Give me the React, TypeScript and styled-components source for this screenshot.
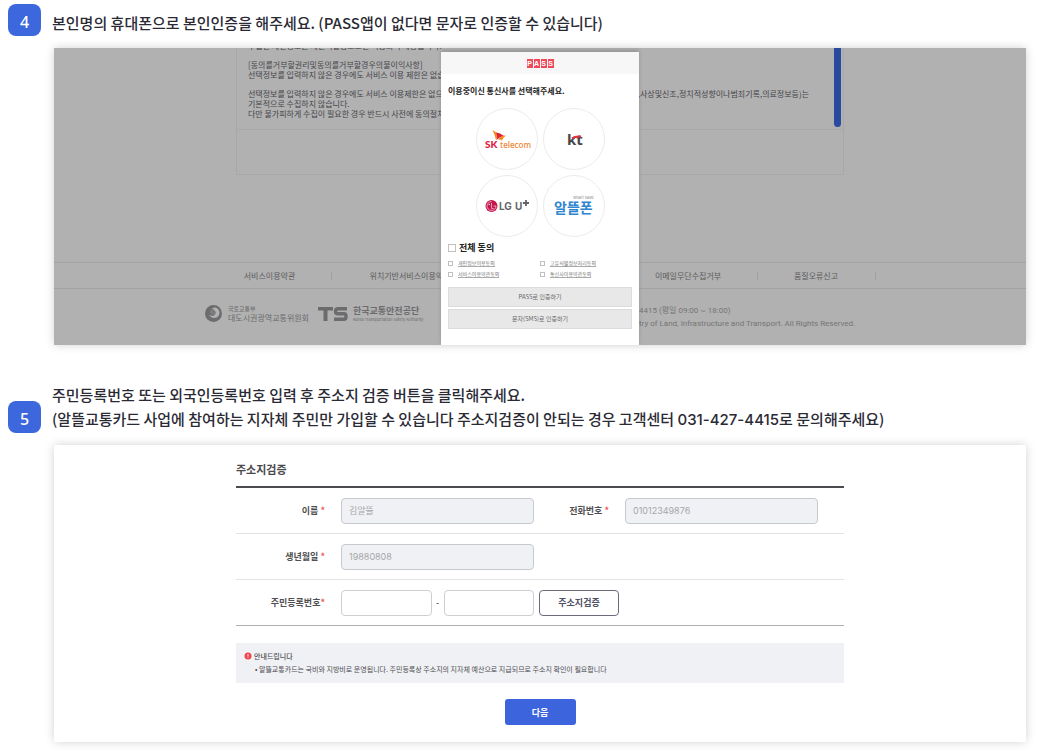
import React from 'react';
import styled, { createGlobalStyle, css } from 'styled-components';

const GlobalStyle = createGlobalStyle`
  *, *::before, *::after { box-sizing: border-box; }
  body {
    margin: 0;
    background: #fff;
    color: #2a2a35;
    font-family: 'Noto Sans CJK KR', 'Noto Sans', sans-serif;
  }
  h2, h3, p, ul { margin: 0; padding: 0; font-weight: inherit; }
  ul { list-style: none; }
  button, input { font: inherit; color: inherit; margin: 0; }
`;

/* ---------- steps ---------- */

const Page = styled.main`
  display: flex;
  flex-direction: column;
  gap: 38px;
  padding: 4px 20px 12px 8px;
`;

const StepHead = styled.header`
  display: flex;
  align-items: flex-end;
  gap: 11px;
`;

const StepNumber = styled.span`
  flex: none;
  width: 33px;
  height: 32px;
  padding-top: 4px;
  border-radius: 8px;
  background: #3c67dd;
  color: #fff;
  font: 500 16px/28px 'Noto Sans', sans-serif;
  text-align: center;
`;

const StepTitle = styled.h2`
  padding-bottom: 1px;
  font-size: 15px;
  line-height: 24px;
  font-weight: 500;
`;

const Latin = styled.span`
  font-family: Inter, sans-serif;
`;

const Card = styled.div<{ $dimmed?: boolean }>`
  position: relative;
  margin: 12px 0 0 46px;
  background: ${(p) => (p.$dimmed ? '#b1b1b1' : '#fff')};
  box-shadow: 0 0 9px rgba(0, 0, 0, 0.18);
`;

const Column = styled.div<{ $width: number }>`
  width: 100%;
  max-width: ${(p) => p.$width}px;
  margin: 0 auto;
`;

/* ---------- dimmed consent page ---------- */

const Backdrop = styled.div`
  overflow: hidden;
  color: #45454a;
  font-size: 8px;
  line-height: 10px;
`;

const ConsentBox = styled(Column)`
  border: 1px solid #a8a8a8;
  border-top: 0;
`;

const ConsentText = styled.div`
  display: flex;
  justify-content: space-between;
  height: 82px;
  padding: 0 2px 0 11px;
  border-bottom: 1px solid #a8a8a8;
`;

const Paragraphs = styled.div`
  flex: 1;
  display: flex;
  flex-direction: column;
  gap: 9px;
  margin-top: -7px;
  padding-right: 25px;
  white-space: nowrap;
`;

const SplitLine = styled.span`
  display: flex;
  justify-content: space-between;
`;

const ScrollThumb = styled.div`
  width: 7px;
  height: 79px;
  border-radius: 0 0 4px 4px;
  background: #2a4a9f;
`;

const ConsentFoot = styled.div`
  height: 44px;
`;

const FooterNav = styled.nav`
  margin-top: 87px;
  border-top: 1px solid #a3a3a3;
  border-bottom: 1px solid #a3a3a3;
`;

const NavList = styled.ul`
  display: grid;
  grid-template-columns: 123fr 158fr 130fr 138fr 118fr;
  align-items: center;
  height: 25px;
  padding-left: 4px;
`;

const NavItem = styled.li<{ $column: number }>`
  grid-column: ${(p) => p.$column};
  border-right: 1px solid #a0a0a0;
  color: #5c5c5e;
  line-height: 8px;
  text-align: center;
  white-space: nowrap;
`;

const FooterInfo = styled.div`
  display: grid;
  grid-template-columns: 435fr 237fr;
  height: 56px;
  padding-top: 15px;
  color: #757575;
`;

const Agencies = styled.div`
  display: flex;
  align-items: flex-start;
  gap: 5px;
  color: #6c6c6e;
`;

const Agency = styled.div`
  white-space: nowrap;
`;

const AgencyLine = styled.p<{ $size: number; $line: number; $bold?: boolean }>`
  font-size: ${(p) => p.$size}px;
  line-height: ${(p) => p.$line}px;
  font-weight: ${(p) => (p.$bold ? 700 : 400)};
`;

const TsMark = styled.svg`
  margin: 3px 0 0 4px;
`;

const Copyright = styled.p`
  font: 8px/13px Roboto, 'Noto Sans CJK KR', sans-serif;
  white-space: nowrap;
`;

/* ---------- PASS dialog ---------- */

const Dialog = styled.section`
  position: absolute;
  top: 4px;
  bottom: 0;
  left: 50%;
  width: 198px;
  transform: translateX(-50%);
  background: #fff;
  box-shadow: 0 -2px 4px rgba(0, 0, 0, 0.16);
`;

const DialogHead = styled.div`
  display: flex;
  justify-content: center;
  align-items: center;
  gap: 1px;
  height: 22px;
  background: #f7f7f8;
`;

const PassLetter = styled.span`
  width: 6px;
  height: 9px;
  background: #f04a5a;
  color: #fff;
  font: 700 7px/9px 'Liberation Sans', sans-serif;
  text-align: center;
`;

const DialogBody = styled.form`
  padding: 11px 7px 0;
`;

const DialogTitle = styled.h3`
  color: #222;
  font-size: 8px;
  line-height: 12px;
  font-weight: 700;
`;

const Carriers = styled.div`
  display: grid;
  grid-template-columns: 62px 62px;
  justify-content: center;
  gap: 5px;
  margin: 11px 0 5px;
`;

const Carrier = styled.button`
  display: grid;
  place-items: center;
  width: 62px;
  height: 62px;
  padding: 0;
  border: 1px solid #ececec;
  border-radius: 50%;
  background: #fff;
`;

const AgreeList = styled.div`
  display: grid;
  grid-template-columns: 1fr 1fr;
  margin: 4px 0 7px;
`;

const Agree = styled.label<{ $all?: boolean }>`
  display: flex;
  align-items: center;
  gap: 5px;
  color: #777;
  font-size: 5px;
  line-height: 6px;
  height: 11px;

  ${(p) =>
    p.$all &&
    css`
      gap: 3px;
      height: 12px;
      color: #222;
      font-size: 9px;
      line-height: 12px;
      font-weight: 700;
    `}
`;

const Tick = styled.input<{ $size: number }>`
  appearance: none;
  width: ${(p) => p.$size}px;
  height: ${(p) => p.$size}px;
  border: 1px solid #c0c0c0;
  background: #fff;
`;

const Underlined = styled.span`
  border-bottom: 1px solid #aaa;
`;

const GreyButton = styled.button`
  display: block;
  width: 100%;
  height: 20px;
  margin-bottom: 2px;
  padding: 0;
  border: 1px solid #dcdcdc;
  background: #e8e8e8;
  color: #666;
  font-size: 6px;
  line-height: 18px;
`;

/* ---------- address form ---------- */

const AddressForm = styled.form`
  width: 100%;
  max-width: 608px;
  margin: 0 auto;
  padding: 16px 0 17px;
`;

const FormTitle = styled.h3`
  padding-bottom: 9px;
  border-bottom: 2px solid #4a4a4f;
  color: #4a4a4c;
  font-size: 11px;
  line-height: 16px;
  font-weight: 700;
`;

const FormRow = styled.div<{ $last?: boolean }>`
  display: grid;
  grid-template-columns: 105fr 193fr 91fr 193fr 26fr;
  align-items: center;
  height: 46px;
  border-bottom: 1px solid ${(p) => (p.$last ? '#b0b0b3' : '#e2e2e4')};
`;

const FieldLabel = styled.label`
  padding-right: 16px;
  color: #505052;
  font-size: 9px;
  line-height: 14px;
  font-weight: 700;
  text-align: right;
  white-space: nowrap;
`;

const Required = styled.span`
  color: #f0525a;
`;

const TextField = styled.input`
  width: 100%;
  min-width: 0;
  height: 26px;
  padding: 0 7px;
  border: 1px solid #cdcfd3;
  border-radius: 4px;
  background: #fff;
  color: #a6a6aa;
  font: 9px/14px Inter, 'Noto Sans CJK KR', sans-serif;

  &:disabled {
    border-color: #c6cacf;
    background: #f0f1f5;
  }
`;

const SplitField = styled.div`
  display: grid;
  grid-template-columns: 1fr 12px 1fr;
  align-items: center;
  font-size: 9px;
  text-align: center;
`;

const VerifyButton = styled.button`
  width: 80px;
  height: 26px;
  margin-left: 5px;
  padding: 0;
  border: 1px solid #6b6b7c;
  border-radius: 4px;
  background: #fff;
  color: #505066;
  font-size: 9px;
  font-weight: 700;
`;

const Notice = styled.div`
  height: 40px;
  margin: 17px 0 16px;
  padding: 6px 8px;
  background: #f0f1f5;
  color: #4d4d52;
  font-size: 7px;
  line-height: 14px;
`;

const NoticeTitle = styled.p`
  display: flex;
  align-items: center;
  gap: 2px;
  font-weight: 500;
`;

const NoticeText = styled.p`
  padding-left: 11px;
  line-height: 13px;
`;

const NextButton = styled.button`
  display: block;
  width: 71px;
  height: 26px;
  margin: 0 auto;
  padding: 0;
  border: 0;
  border-radius: 3px;
  background: #3c64dc;
  color: #fff;
  font-size: 9px;
  font-weight: 700;
`;

/* ---------- logos ---------- */

const SkLogo = () => (
  <svg width="46" height="24" viewBox="0 0 46 24" overflow="visible" aria-label="SK telecom">
    <path d="M8.500 3 L14.500 7 L12 13 Q11 8 8.500 3Z" fill="#f08a1d" />
    <path d="M12 5.500 Q16 5.500 20 9 Q16 9.500 12.500 13 Q14 9 12 5.500Z" fill="#e0203c" />
    <path d="M14 12.500 Q17 8.500 22 8.500 Q19 10.500 18 13.500 Q16 12 14 12.500Z" fill="#f08a1d" />
    <text x="1" y="21" fontFamily="Lato, sans-serif" fontWeight="900" fontSize="10" fill="#e0203c">SK</text>
    <text x="16" y="21" fontFamily="Open Sans, sans-serif" fontWeight="600" fontSize="8" fill="#ee8a3c">telecom</text>
  </svg>
);

const KtLogo = () => (
  <svg width="16" height="20" viewBox="0 0 16 20" overflow="visible" aria-label="kt">
    <text x="1" y="16" fontFamily="Open Sans, sans-serif" fontWeight="700" fontSize="15" fill="#4a4648">kt</text>
    <path d="M6 9.500 Q9 6.800 15 7.600" fill="none" stroke="#e0303c" strokeWidth="2" />
  </svg>
);

const LgLogo = () => (
  <svg width="46" height="20" viewBox="0 0 46 20" overflow="visible" aria-label="LG U+">
    <circle cx="7.500" cy="10" r="6" fill="#c4154d" />
    <path d="M7.500 7 V12.500 H9.500 M7.500 5.500 A4.500 4.500 0 1 0 12 10 H9.500" fill="none" stroke="#f4c3d2" strokeWidth="0.800" />
    <circle cx="5.300" cy="8.500" r="0.800" fill="#f4c3d2" />
    <text x="15" y="14" fontFamily="Inter, sans-serif" fontWeight="700" fontSize="10" fill="#636466">LG</text>
    <text x="31" y="14" fontFamily="Inter, sans-serif" fontWeight="700" fontSize="10" fill="#636466">U</text>
    <path d="M42 4 V10 M39 7 H45" stroke="#636466" strokeWidth="1.800" />
  </svg>
);

const AlddeulLogo = () => (
  <svg width="42" height="28" viewBox="0 0 42 28" overflow="visible" aria-label="알뜰폰">
    <text x="20" y="7" fontFamily="Inter, sans-serif" fontSize="4" fill="#888">smart save</text>
    <text x="1" y="21" fontFamily="Noto Sans CJK KR, sans-serif" fontWeight="700" fontSize="14" fill="#2f86cf">알뜰폰</text>
  </svg>
);

const GovEmblem = () => (
  <svg width="19" height="19" viewBox="0 0 19 19" aria-hidden="true">
    <circle cx="9.500" cy="9.500" r="8.500" fill="#6c6c6e" />
    <path d="M8 4.500 Q11 2.500 13.500 4.500 Q15.500 6.500 15.500 9 Q15 13.500 10.500 14 Q6.500 14 5 10.500 Q8 13 10.500 11 Q12.500 9 11 7 Q9.800 5.500 8 4.500Z" fill="#b1b1b1" />
    <path d="M8 4.500 Q5.500 6 6 8.500 Q7 11.500 10.500 11 Q12.500 9 11 7 Q9.800 5.500 8 4.500Z" fill="#7c7c7e" />
  </svg>
);

const AlertIcon = () => (
  <svg width="8" height="8" viewBox="0 0 8 8" aria-hidden="true">
    <circle cx="4" cy="4" r="3.500" fill="#f0434b" />
    <path d="M4 2 V4.500 M4 5.200 V6" stroke="#fff" strokeWidth="0.900" />
  </svg>
);

/* ---------- parts ---------- */

const agreements = ['개인정보이용동의', '고유식별정보처리동의', '서비스이용약관동의', '통신사이용약관동의'];

const carriers = [
  { name: 'SK telecom', Logo: SkLogo },
  { name: 'kt', Logo: KtLogo },
  { name: 'LG U+', Logo: LgLogo },
  { name: '알뜰폰', Logo: AlddeulLogo },
];

const footerLinks = [
  { column: 1, text: '서비스이용약관' },
  { column: 2, text: '위치기반서비스이용약관' },
  { column: 4, text: '이메일무단수집거부' },
  { column: 5, text: '품질오류신고' },
];

function ConsentPage() {
  return (
    <Backdrop>
      <ConsentBox $width={608}>
        <ConsentText>
          <Paragraphs>
            <p>수집한 개인정보는 개인식별용도로만 이용되며 제공됩니다.</p>
            <p>
              [동의를거부할권리및동의를거부할경우의불이익사항]
              <br />
              선택정보를 입력하지 않은 경우에도 서비스 이용 제한은 없습니다.
            </p>
            <p>
              <SplitLine>
                <span>선택정보를 입력하지 않은 경우에도 서비스 이용제한은 없으며</span>
                <span>,사상및신조,정치적성향이나범죄기록,의료정보등)는</span>
              </SplitLine>
              기본적으로 수집하지 않습니다.
              <br />
              다만 불가피하게 수집이 필요한 경우 반드시 사전에 동의절차를
            </p>
          </Paragraphs>
          <ScrollThumb />
        </ConsentText>
        <ConsentFoot />
      </ConsentBox>
      <FooterNav>
        <Column $width={671}>
          <NavList>
            {footerLinks.map((link) => (
              <NavItem key={link.text} $column={link.column}>
                {link.text}
              </NavItem>
            ))}
          </NavList>
        </Column>
      </FooterNav>
      <Column $width={672}>
        <FooterInfo>
          <Agencies>
            <GovEmblem />
            <Agency>
              <AgencyLine $size={6} $line={9}>국토교통부</AgencyLine>
              <AgencyLine $size={8} $line={9}>대도시권광역교통위원회</AgencyLine>
            </Agency>
            <TsMark width="30" height="14" viewBox="0 0 30 14" aria-label="TS">
              <path d="M0 0 H15 V3.500 H9.500 V14 H5.500 V3.500 H0Z" fill="#6c6c6e" />
              <path d="M29 1.700 H20 Q17.500 1.700 17.500 4 Q17.500 6.800 20 6.800 H26 Q28 6.800 28 9.500 Q28 12.300 26 12.300 H16" fill="none" stroke="#6c6c6e" strokeWidth="3.400" />
            </TsMark>
            <Agency>
              <AgencyLine $size={9} $line={13} $bold>한국교통안전공단</AgencyLine>
              <AgencyLine $size={4} $line={4}>Korea Transportation Safety Authority</AgencyLine>
            </Agency>
          </Agencies>
          <div>
            <Copyright>4415 (평일 09:00 ~ 18:00)</Copyright>
            <Copyright>try of Land, Infrastructure and Transport. All Rights Reserved.</Copyright>
          </div>
        </FooterInfo>
      </Column>
    </Backdrop>
  );
}

function PassDialog() {
  return (
    <Dialog aria-label="PASS">
      <DialogHead>
        {['P', 'A', 'S', 'S'].map((letter, i) => (
          <PassLetter key={i}>{letter}</PassLetter>
        ))}
      </DialogHead>
      <DialogBody>
        <DialogTitle>이용중이신 통신사를 선택해주세요.</DialogTitle>
        <Carriers>
          {carriers.map(({ name, Logo }) => (
            <Carrier key={name} type="button">
              <Logo />
            </Carrier>
          ))}
        </Carriers>
        <Agree $all>
          <Tick type="checkbox" $size={8} />
          전체 동의
        </Agree>
        <AgreeList>
          {agreements.map((text) => (
            <Agree key={text}>
              <Tick type="checkbox" $size={5} />
              <Underlined>{text}</Underlined>
            </Agree>
          ))}
        </AgreeList>
        <GreyButton type="button">PASS로 인증하기</GreyButton>
        <GreyButton type="button">문자(SMS)로 인증하기</GreyButton>
      </DialogBody>
    </Dialog>
  );
}

function AddressCheck() {
  return (
    <AddressForm>
      <FormTitle>주소지검증</FormTitle>
      <FormRow>
        <FieldLabel htmlFor="name">
          이름 <Required>*</Required>
        </FieldLabel>
        <TextField id="name" defaultValue="김알뜰" disabled />
        <FieldLabel htmlFor="phone">
          전화번호 <Required>*</Required>
        </FieldLabel>
        <TextField id="phone" defaultValue="01012349876" disabled />
      </FormRow>
      <FormRow>
        <FieldLabel htmlFor="birth">
          생년월일 <Required>*</Required>
        </FieldLabel>
        <TextField id="birth" defaultValue="19880808" disabled />
      </FormRow>
      <FormRow $last>
        <FieldLabel id="resident-label" htmlFor="resident">
          주민등록번호<Required>*</Required>
        </FieldLabel>
        <SplitField>
          <TextField id="resident" />
          <span>-</span>
          <TextField type="password" autoComplete="off" aria-labelledby="resident-label" />
        </SplitField>
        <VerifyButton type="button">주소지검증</VerifyButton>
      </FormRow>
      <Notice>
        <NoticeTitle>
          <AlertIcon />
          안내드립니다
        </NoticeTitle>
        <NoticeText>
          • 알뜰교통카드는 국비와 지방비로 운영됩니다. 주민등록상 주소지의 지자체 예산으로 지급되므로 주소지 확인이 필요합니다
        </NoticeText>
      </Notice>
      <NextButton type="button">다음</NextButton>
    </AddressForm>
  );
}

export default function App() {
  return (
    <>
      <GlobalStyle />
      <Page>
        <section>
          <StepHead>
            <StepNumber>4</StepNumber>
            <StepTitle>
              본인명의 휴대폰으로 본인인증을 해주세요. (PASS앱이 없다면 문자로 인증할 수 있습니다)
            </StepTitle>
          </StepHead>
          <Card $dimmed>
            <ConsentPage />
            <PassDialog />
          </Card>
        </section>
        <section>
          <StepHead>
            <StepNumber>5</StepNumber>
            <StepTitle>
              주민등록번호 또는 외국인등록번호 입력 후 주소지 검증 버튼을 클릭해주세요.
              <br />
              (알뜰교통카드 사업에 참여하는 지자체 주민만 가입할 수 있습니다 주소지검증이 안되는 경우 고객센터{' '}
              <Latin>031-427-4415</Latin>로 문의해주세요)
            </StepTitle>
          </StepHead>
          <Card>
            <AddressCheck />
          </Card>
        </section>
      </Page>
    </>
  );
}
